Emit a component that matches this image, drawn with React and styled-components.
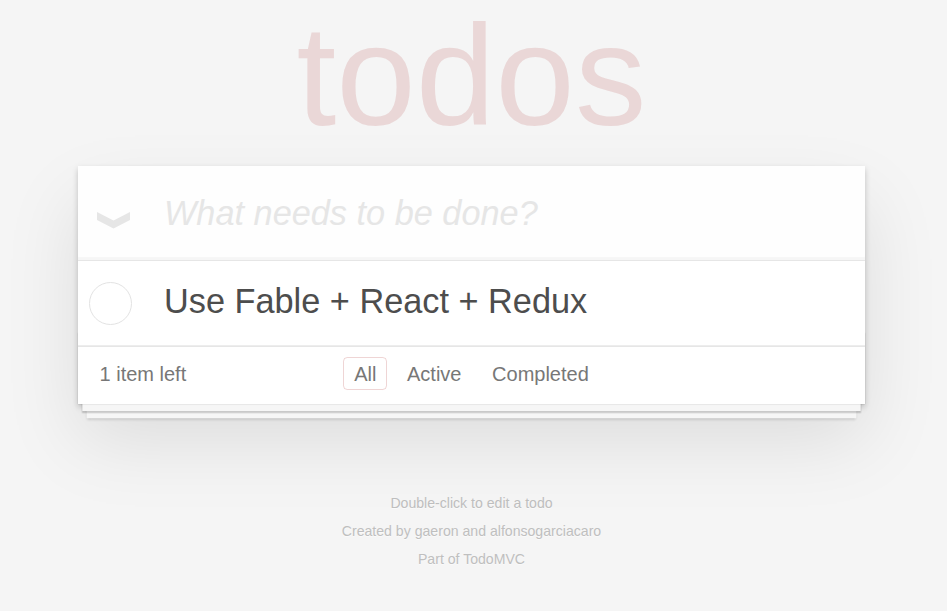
import React from 'react';
import styled, { createGlobalStyle } from 'styled-components';

const GlobalStyle = createGlobalStyle`
	html,
	body {
		margin: 0;
		padding: 0;
	}
	body {
		background: #f5f5f5;
		color: #4d4d4d;
		font-family: 'Liberation Sans', Arial, sans-serif;
		font-size: 20px;
		line-height: 28px;
		-webkit-font-smoothing: antialiased;
	}
`;

const Page = styled.div`
	width: 787px;
	margin-left: 78px;
	padding-top: 4px;
`;

const Title = styled.h1`
	margin: 0 0 19px;
	height: 143px;
	font-size: 143px;
	line-height: 143px;
	font-weight: 400;
	text-align: center;
	color: rgba(175, 47, 47, 0.15);
	text-rendering: optimizeLegibility;
`;

const Card = styled.section`
	position: relative;
	background: #fff;
	box-shadow: 0 3px 6px 0 rgba(0, 0, 0, 0.2), 0 36px 72px 0 rgba(0, 0, 0, 0.1);
`;

const NewRow = styled.header`
	display: flex;
	height: 94px;
	background: rgba(0, 0, 0, 0.003);
	box-shadow: inset 0 -3px 1px rgba(0, 0, 0, 0.03);
`;

const ToggleAll = styled.label`
	flex: none;
	width: 86px;
	box-sizing: border-box;
	padding: 45.5px 0 0 19px;

	svg {
		display: block;
	}
`;

const NewInput = styled.input`
	flex: 1;
	min-width: 0;
	height: 94px;
	box-sizing: border-box;
	margin: 0;
	padding: 23px 21px 23px 0;
	border: 0;
	outline: none;
	background: transparent;
	font-family: inherit;
	font-size: 34.3px;
	line-height: 48px;
	color: #4d4d4d;

	&::placeholder {
		font-style: italic;
		color: #e6e6e6;
	}
`;

const TodoList = styled.ul`
	margin: 0;
	padding: 0;
	list-style: none;
	border-top: 1px solid #e6e6e6;
`;

const TodoItem = styled.li`
	display: flex;
	align-items: center;
	border-bottom: 1px solid #ededed;
	font-size: 34.3px;
`;

const Check = styled.span`
	flex: none;
	width: 43px;
	height: 43px;
	box-sizing: border-box;
	margin: 0 32px 0 11px;
	border: 1px solid #e3e3e3;
	border-radius: 50%;
`;

const TodoLabel = styled.label`
	flex: 1;
	padding: 20px 21.5px 23px 0;
	line-height: 41px;
	word-break: break-all;
`;

const Footer = styled.footer`
	position: relative;
	display: grid;
	grid-template-columns: 1fr auto 1fr;
	align-items: center;
	align-content: center;
	height: 28.6px;
	padding: 12.3px 21.5px 16.3px;
	border-top: 1px solid #e6e6e6;
	color: #777;
	font-size: 20px;
	line-height: 28px;

	&::before {
		content: '';
		position: absolute;
		left: 0;
		right: 0;
		bottom: 0;
		height: 72px;
		pointer-events: none;
		box-shadow: 0 1.4px 1.4px rgba(0, 0, 0, 0.2),
			0 11.4px 0 -4.3px #f6f6f6,
			0 12.9px 1.4px -4.3px rgba(0, 0, 0, 0.2),
			0 22.9px 0 -8.6px #f6f6f6,
			0 24.3px 2.9px -8.6px rgba(0, 0, 0, 0.2);
	}
`;

const Count = styled.span`
	justify-self: start;

	strong {
		font-weight: 400;
	}
`;

const Filters = styled.ul`
	display: flex;
	margin: 0;
	padding: 0;
	list-style: none;
`;

const FilterLink = styled.a`
	display: block;
	margin: 0 4.3px;
	padding: 4.7px 10px;
	line-height: 22px;
	border: 1px solid ${(p) => (p.$selected ? 'rgba(175, 47, 47, 0.2)' : 'transparent')};
	border-radius: 4.3px;
	color: inherit;
	text-decoration: none;
`;

const Info = styled.footer`
	margin-top: 92px;
	text-align: center;
	color: #bfbfbf;
	font-size: 14.1px;
	line-height: 1;
	text-shadow: 0 1px 0 rgba(255, 255, 255, 0.5);

	p {
		margin: 13.6px 0;
	}

	a {
		color: inherit;
		text-decoration: none;
	}
`;

const Chevron = () => (
	<svg width="34" height="17" viewBox="0 0 34 17">
		<path d="M0 0 L16.5 8.5 L33 0 L33 8 L16.5 16.5 L0 8 Z" fill="#e6e6e6" />
	</svg>
);

const filters = ['All', 'Active', 'Completed'];

export default function App() {
	return (
		<>
			<GlobalStyle />
			<Page>
				<Title>todos</Title>
				<Card>
					<NewRow>
						<ToggleAll>
							<Chevron />
						</ToggleAll>
						<NewInput placeholder="What needs to be done?" />
					</NewRow>
					<TodoList>
						<TodoItem>
							<Check />
							<TodoLabel>Use Fable + React + Redux</TodoLabel>
						</TodoItem>
					</TodoList>
					<Footer>
						<Count>
							<strong>1</strong> item left
						</Count>
						<Filters>
							{filters.map((f) => (
								<li key={f}>
									<FilterLink href="#" $selected={f === 'All'}>
										{f}
									</FilterLink>
								</li>
							))}
						</Filters>
					</Footer>
				</Card>
				<Info>
					<p>Double-click to edit a todo</p>
					<p>
						Created by <a href="#">gaeron</a> and <a href="#">alfonsogarciacaro</a>
					</p>
					<p>
						Part of <a href="#">TodoMVC</a>
					</p>
				</Info>
			</Page>
		</>
	);
}
